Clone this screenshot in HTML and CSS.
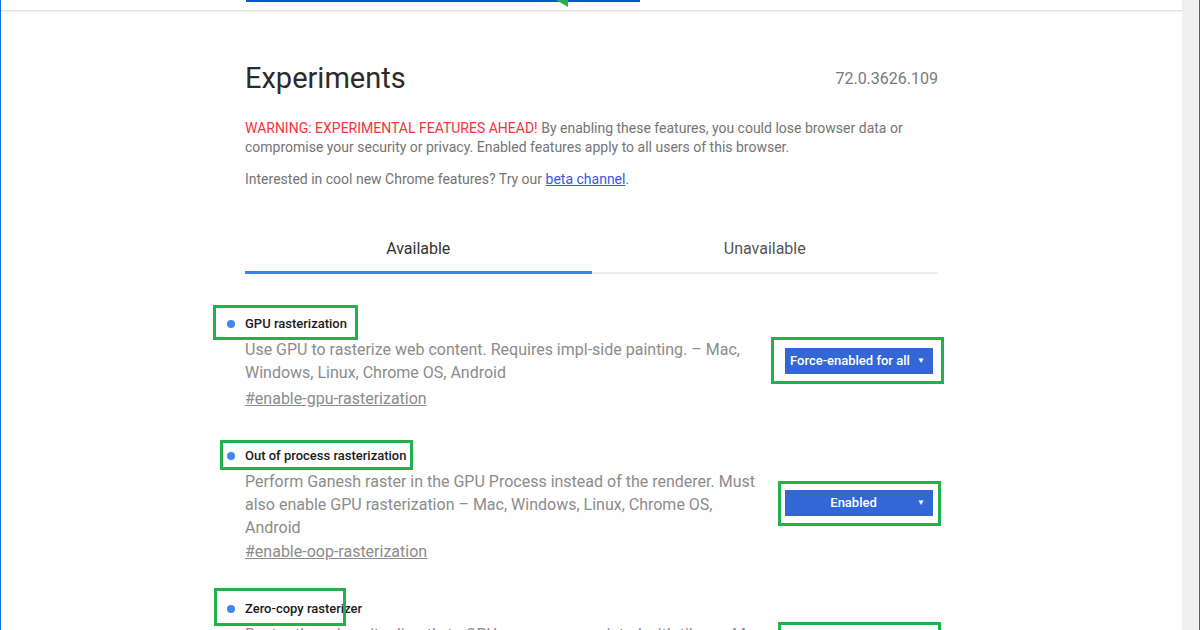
FILE: index.html
```html
<!DOCTYPE html>
<html lang="en">

<head>
    <meta charset="utf-8">
    <meta name="viewport" content="width=device-width, initial-scale=1.0">
    <title>Experiments</title>

    <link rel="stylesheet" href="styles.css">

</head>

<body>
    <div class="window">
        <div class="page">
            <header class="top_bar">
                <div class="search_line"></div>
                <svg class="arrow_tip" width="14" height="8" viewBox="0 0 14 8">
                    <polygon points="0,0 12,0 12,7" fill="#22b14c" />
                </svg>
            </header>

            <main class="content">
                <div class="head_row">
                    <h1>Experiments</h1>
                    <span class="version">72.0.3626.109</span>
                </div>

                <p class="warning"><span class="warn_red">WARNING: EXPERIMENTAL FEATURES AHEAD!</span> By enabling these features, you could lose browser data or compromise your security or privacy. Enabled features apply to all users of this browser.</p>
                <p class="interested">Interested in cool new Chrome features? Try our <a href="#">beta channel</a>.</p>

                <nav class="tabs">
                    <div class="tab valgt">Available</div>
                    <div class="tab">Unavailable</div>
                </nav>

                <section class="experiments">

                    <article class="experiment">
                        <div class="exp_text">
                            <h3 class="exp_title mark_1"><span class="dot"></span>GPU rasterization</h3>
                            <p class="exp_desc">Use GPU to rasterize web content. Requires impl-side painting. – Mac,<br>Windows, Linux, Chrome OS, Android</p>
                            <a class="exp_link" href="#">#enable-gpu-rasterization</a>
                        </div>
                        <div class="exp_actions">
                            <div class="select sel_mark_1">
                                <span class="select_label">Force-enabled for all</span>
                                <span class="caret">▼</span>
                            </div>
                        </div>
                    </article>

                    <article class="experiment">
                        <div class="exp_text">
                            <h3 class="exp_title mark_2"><span class="dot"></span>Out of process rasterization</h3>
                            <p class="exp_desc">Perform Ganesh raster in the GPU Process instead of the renderer. Must<br>also enable GPU rasterization – Mac, Windows, Linux, Chrome OS,<br>Android</p>
                            <a class="exp_link link_tight" href="#">#enable-oop-rasterization</a>
                        </div>
                        <div class="exp_actions">
                            <div class="select centered sel_mark_2">
                                <span class="select_label">Enabled</span>
                                <span class="caret">▼</span>
                            </div>
                        </div>
                    </article>

                    <article class="experiment">
                        <div class="exp_text">
                            <h3 class="exp_title mark_3"><span class="dot"></span>Zero-copy rasterizer</h3>
                            <p class="exp_desc">Raster threads write directly to GPU memory associated with tiles. – Mac,<br>Windows, Linux, Chrome OS, Android</p>
                            <a class="exp_link" href="#">#enable-zero-copy</a>
                        </div>
                        <div class="exp_actions">
                            <div class="select sel_mark_3">
                                <span class="select_label">Default</span>
                                <span class="caret">▼</span>
                            </div>
                        </div>
                    </article>

                </section>
            </main>
        </div>
        <div class="scrollbar"></div>
    </div>
</body></html>
```

FILE: styles.css
```css
html,
body {
    margin: 0;
    height: 100%;
    overflow: hidden;
}

body {
    background-color: white;
    font-family: Roboto, "Liberation Sans", sans-serif;
}

.window {
    display: flex;
    height: 630px;
    border-left: 1px solid #1a6fd8;
}

.page {
    flex: 1;
    background-color: #fefefe;
}

.scrollbar {
    width: 17px;
    background-color: #f0f0f0;
    border-right: 1px solid #1c6ec2;
}

/* top toolbar strip */

.top_bar {
    position: relative;
    height: 10px;
    background-color: white;
    border-bottom: 1px solid #e2e2e2;
    box-shadow: 0 1px 3px rgba(0, 0, 0, 0.07);
}

.search_line {
    margin-left: 245px;
    width: 394px;
    height: 2px;
    background-color: #0a56cc;
}

.arrow_tip {
    position: absolute;
    left: 555px;
    top: 0;
}

/* main column */

.content {
    width: 693px;
    margin-left: 244px;
    padding-top: 49px;
}

.head_row {
    display: flex;
    justify-content: space-between;
    align-items: center;
}

h1 {
    margin: 0;
    font-size: 29px;
    line-height: 36px;
    font-weight: 400;
    color: #2b2b2b;
}

.version {
    font-size: 16px;
    color: #7a7a7a;
}

.warning,
.interested {
    margin: 0;
    font-size: 14px;
    line-height: 19px;
    color: #757575;
}

.warning {
    margin-top: 23px;
}

.interested {
    margin-top: 13px;
}

.warn_red {
    color: #f5333f;
}

.interested a {
    color: #3b55e6;
}

/* tabs */

.tabs {
    display: flex;
    margin-top: 40px;
}

.tab {
    flex: 1;
    text-align: center;
    font-size: 16px;
    line-height: 38px;
    color: #555;
    padding-top: 1px;
    padding-bottom: 4px;
    border-bottom: 2px solid #ececec;
}

.tab.valgt {
    color: #333;
    padding-bottom: 3px;
    border-bottom: 3px solid #3f80f0;
}

/* experiments */

.experiments {
    margin-top: 42px;
}

.experiment {
    display: flex;
    align-items: center;
    justify-content: space-between;
    margin-bottom: 38px;
}

.exp_text {
    width: 560px;
}

.exp_title {
    position: relative;
    margin: 0;
    font-size: 13px;
    line-height: 16px;
    font-weight: 500;
    color: #1c1c1c;
}

.dot {
    display: inline-block;
    width: 8px;
    height: 8px;
    border-radius: 50%;
    background-color: #4285f4;
    margin-left: -18px;
    margin-right: 10px;
    vertical-align: 0;
}

.exp_desc {
    margin: 6px 0 0;
    font-size: 16px;
    line-height: 23px;
    color: #8c8c8c;
}

.exp_link {
    display: inline-block;
    margin-top: 3px;
    font-size: 16px;
    line-height: 23px;
    color: #8c8c8c;
}

.link_tight {
    margin-top: 1px;
}

.exp_actions {
    margin-right: 5px;
}

.select {
    position: relative;
    display: flex;
    align-items: center;
    width: 148px;
    height: 26px;
    box-sizing: border-box;
    padding: 0 8px 0 5px;
    background-color: #3367d6;
    color: white;
    font-size: 13px;
    font-weight: 500;
}

.select_label {
    flex: 1;
}

.centered .select_label {
    text-align: center;
}

.caret {
    font-size: 8px;
}

.sel_mark_1 {
    margin-bottom: 5px;
}

.sel_mark_2 {
    margin-bottom: 6px;
}

/* green annotation boxes drawn over the screenshot */

.exp_title::after,
.select::after {
    content: "";
    position: absolute;
    box-sizing: border-box;
    border: 3px solid #22b14c;
}

.mark_1::after {
    left: -32px;
    top: -11px;
    width: 145px;
    height: 35px;
}

.mark_2::after {
    left: -25px;
    top: -8px;
    width: 193px;
    height: 30px;
}

.mark_3::after {
    left: -31px;
    top: -13px;
    width: 132px;
    height: 38px;
}

.sel_mark_1::after {
    left: -14px;
    top: -11px;
    width: 173px;
    height: 47px;
}

.sel_mark_2::after {
    left: -7px;
    top: -9px;
    width: 163px;
    height: 45px;
}

.sel_mark_3::after {
    left: -7px;
    top: -13px;
    width: 163px;
    height: 45px;
}
```
